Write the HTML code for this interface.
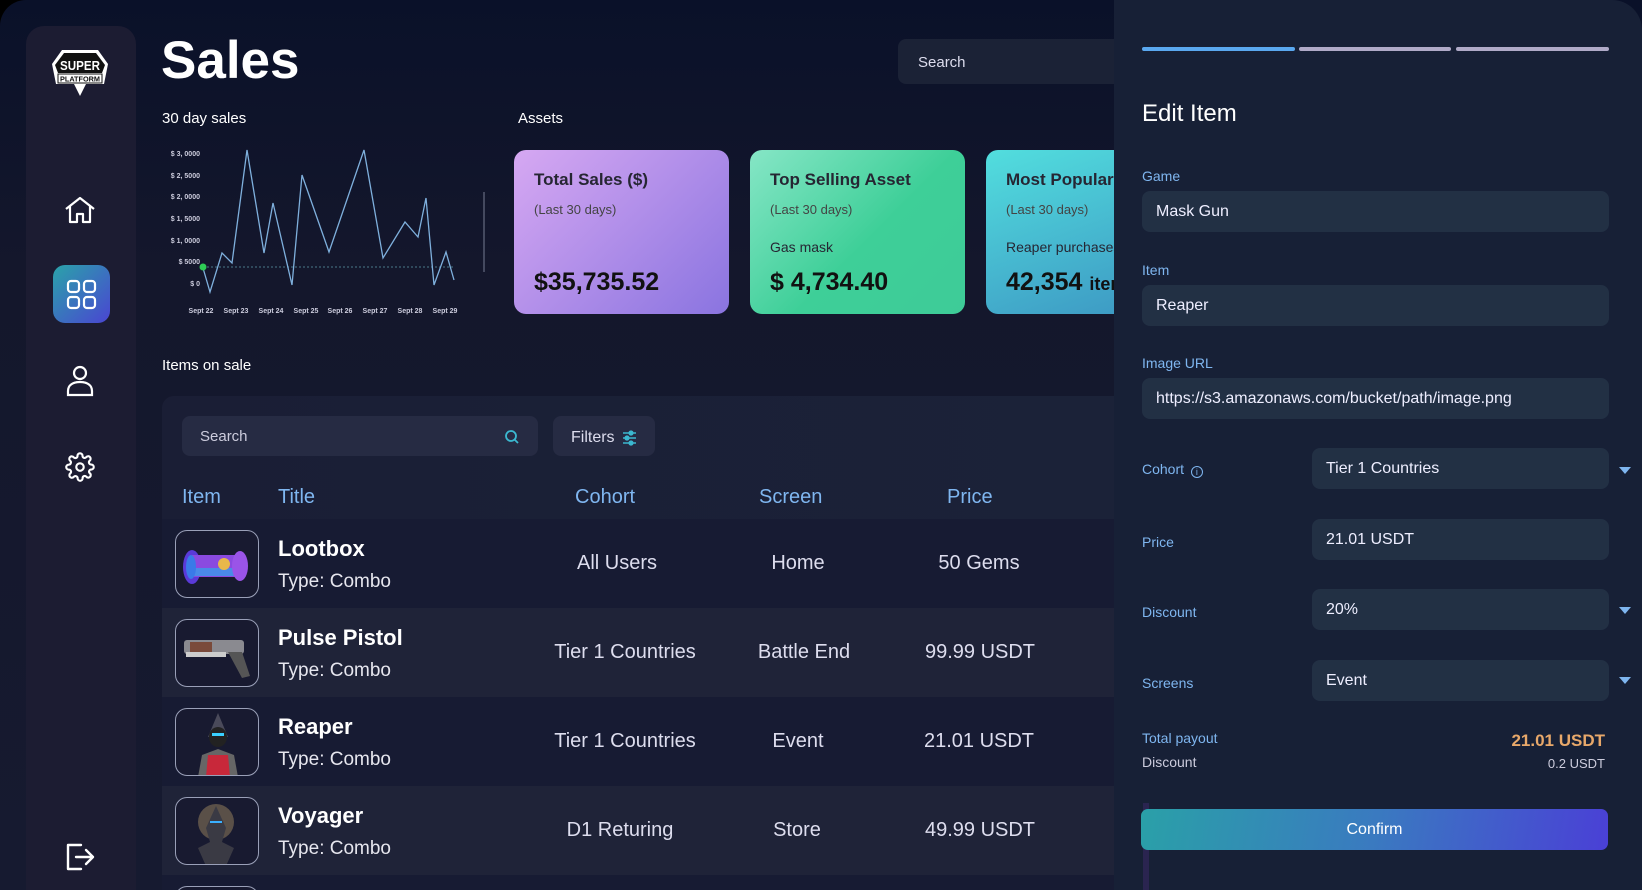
<!DOCTYPE html>
<html><head><meta charset="utf-8">
<style>
*{margin:0;padding:0;box-sizing:border-box}
html,body{width:1642px;height:890px;overflow:hidden}
body{background:#000;font-family:"Liberation Sans",sans-serif;color:#fff}
#app{position:absolute;left:0;top:0;width:1642px;height:890px;border-radius:26px 0 0 0;overflow:hidden;background:linear-gradient(180deg,#0a1129 0%,#14172c 30%,#161a30 100%)}
.abs{position:absolute}
#side{left:26px;top:26px;width:110px;height:864px;border-radius:18px 18px 0 0;background:#1c1c32}
.txt{position:absolute;white-space:nowrap}
.card{position:absolute;top:150px;width:215px;height:164px;border-radius:12px;color:#1a1a1a}
.card .t{position:absolute;left:20px;top:20px;font-size:17px;font-weight:bold;color:#262633}
.card .s{position:absolute;left:20px;top:52px;font-size:13px;color:#444}
.card .m{position:absolute;left:20px;top:89px;font-size:14px;color:#262633}
.card .v{position:absolute;left:20px;top:118px;font-size:25px;font-weight:bold;color:#111}
#panel{left:1114px;top:0;width:528px;height:890px;background:#172036;border-radius:0 30px 0 0}
.lbl{position:absolute;font-size:14px;color:#7fb6f0}
.inp{position:absolute;height:41px;background:#223044;border-radius:8px;font-size:16px;color:#eef;padding-left:14px;line-height:41px}
.arr{position:absolute;left:1619px;width:0;height:0;border-left:6px solid transparent;border-right:6px solid transparent;border-top:7px solid #7fb6f0}
.row{position:absolute;left:162px;width:952px;height:89px;overflow:hidden}
.thumb{position:absolute;left:13px;top:11px;width:84px;height:68px;border:1.5px solid #9aa0b8;border-radius:12px;background:#181a30;overflow:hidden}
.nm{position:absolute;left:116px;top:17px;font-size:22px;font-weight:bold}
.ty{position:absolute;left:116px;top:52px;font-size:19px;color:#e6e6ee}
.c{position:absolute;top:33px;font-size:20px;color:#dde;transform:translateX(-50%);white-space:nowrap}
.hd{position:absolute;top:486px;font-size:20px;color:#7fb6f0}
</style></head><body>
<div id="app">
<div class="abs" id="side"></div>
<!-- logo -->
<svg class="abs" style="left:48px;top:48px" width="64" height="52" viewBox="0 0 64 52">
<path d="M14 2 L50 2 L60 16 L56 36 L38 36 L32 48 L26 36 L8 36 L4 16 Z" fill="#fff"/>
<path d="M16 5 L48 5 L57 17 L54 25 L10 25 L7 17 Z" fill="#111"/>
<rect x="10" y="26" width="44" height="9" fill="#fff" stroke="#111"/>
<text x="32" y="22" font-size="13" font-weight="bold" fill="#fff" text-anchor="middle" font-family="Liberation Sans" textLength="40" lengthAdjust="spacingAndGlyphs">SUPER</text>
<text x="32" y="33.5" font-size="7.5" font-weight="bold" fill="#111" text-anchor="middle" font-family="Liberation Sans" textLength="40" lengthAdjust="spacingAndGlyphs">PLATFORM</text>
</svg>
<svg class="abs" style="left:64px;top:196px" width="32" height="28" viewBox="0 0 32 28" fill="none" stroke="#fff" stroke-width="2.2" stroke-linejoin="round"><path d="M2 13 L16 2 L30 13 M6 10 V26 H13 V18 H19 V26 H26 V10"/></svg>
<div class="abs" style="left:53px;top:265px;width:57px;height:58px;border-radius:12px;background:linear-gradient(135deg,#2aa3a9,#4a45d2)"></div>
<svg class="abs" style="left:66px;top:279px" width="31" height="31" viewBox="0 0 31 31" fill="none" stroke="#fff" stroke-width="2.2"><rect x="2" y="2" width="11" height="11" rx="3"/><rect x="18" y="2" width="11" height="11" rx="3"/><rect x="2" y="18" width="11" height="11" rx="3"/><rect x="18" y="18" width="11" height="11" rx="3"/></svg>
<svg class="abs" style="left:66px;top:365px" width="28" height="32" viewBox="0 0 28 32" fill="none" stroke="#fff" stroke-width="2.2"><circle cx="14" cy="8" r="6"/><path d="M2 30 V26 C2 20 7 17 14 17 C21 17 26 20 26 26 V30 Z"/></svg>
<svg class="abs" style="left:65px;top:452px" width="30" height="30" viewBox="0 0 24 24" fill="none" stroke="#fff" stroke-width="1.7"><circle cx="12" cy="12" r="3"/><path d="M19.4 15a1.7 1.7 0 0 0 .3 1.8l.1.1a2 2 0 1 1-2.8 2.8l-.1-.1a1.7 1.7 0 0 0-1.8-.3 1.7 1.7 0 0 0-1 1.5V21a2 2 0 1 1-4 0v-.1a1.7 1.7 0 0 0-1.1-1.5 1.7 1.7 0 0 0-1.8.3l-.1.1a2 2 0 1 1-2.8-2.8l.1-.1a1.7 1.7 0 0 0 .3-1.8 1.7 1.7 0 0 0-1.5-1H3a2 2 0 1 1 0-4h.1a1.7 1.7 0 0 0 1.5-1.100 1.7 1.7 0 0 0-.3-1.8l-.1-.1a2 2 0 1 1 2.8-2.8l.1.1a1.7 1.7 0 0 0 1.8.3H9a1.7 1.7 0 0 0 1-1.5V3a2 2 0 1 1 4 0v.1a1.7 1.7 0 0 0 1 1.5 1.7 1.7 0 0 0 1.8-.3l.1-.1a2 2 0 1 1 2.8 2.8l-.1.1a1.7 1.7 0 0 0-.3 1.8V9a1.7 1.7 0 0 0 1.5 1H21a2 2 0 1 1 0 4h-.1a1.7 1.7 0 0 0-1.5 1z"/></svg>
<svg class="abs" style="left:65px;top:842px" width="30" height="30" viewBox="0 0 30 30" fill="none" stroke="#fff" stroke-width="2.4" stroke-linejoin="round" stroke-linecap="round"><path d="M16 3 H3 V27 H16 M11 15 H28 M21 8 L28 15 L21 22"/></svg>

<div class="txt" style="left:161px;top:30px;font-size:53px;font-weight:bold">Sales</div>
<div class="txt" style="left:162px;top:110px;font-size:15px">30 day sales</div>
<div class="txt" style="left:518px;top:110px;font-size:15px">Assets</div>

<svg class="abs" style="left:160px;top:140px" width="340" height="185" viewBox="160 140 340 185" font-family="Liberation Sans" font-size="7" font-weight="bold" fill="#ccd">
<g text-anchor="end"><text x="200" y="156">$ 3, 0000</text><text x="200" y="178">$ 2, 5000</text><text x="200" y="199">$ 2, 0000</text><text x="200" y="221">$ 1, 5000</text><text x="200" y="243">$ 1, 0000</text><text x="200" y="264">$ 5000</text><text x="200" y="286">$ 0</text></g>
<g text-anchor="middle"><text x="201" y="313">Sept 22</text><text x="236" y="313">Sept 23</text><text x="271" y="313">Sept 24</text><text x="306" y="313">Sept 25</text><text x="340" y="313">Sept 26</text><text x="375" y="313">Sept 27</text><text x="410" y="313">Sept 28</text><text x="445" y="313">Sept 29</text></g>
<line x1="203" y1="267" x2="454" y2="267" stroke="#4a7a8a" stroke-dasharray="2 2" stroke-width="1"/>
<polyline fill="none" stroke="#7fb0dd" stroke-width="1.3" points="203,268 210,292 222,253 232,263 247,150 264,253 273,203 292,285 302,175 329,252 364,150 383,258 405,222 418,237 426,198 434,285 446,252 454,280"/>
<circle cx="203" cy="267" r="3.5" fill="#2ecc55"/>
<line x1="484" y1="192" x2="484" y2="272" stroke="#555a70" stroke-width="1.5"/>
</svg>

<div class="card" style="left:514px;background:linear-gradient(135deg,#d6a8f2,#8a74e0)"><div class="t">Total Sales ($)</div><div class="s">(Last 30 days)</div><div class="v">$35,735.52</div></div>
<div class="card" style="left:750px;background:linear-gradient(135deg,#86e6c6,#3ecf98 55%,#3ecb98)"><div class="t">Top Selling Asset</div><div class="s">(Last 30 days)</div><div class="m">Gas mask</div><div class="v">$ 4,734.40</div></div>
<div class="card" style="left:986px;width:240px;background:linear-gradient(160deg,#52dede,#3a8fc0)"><div class="t">Most Popular</div><div class="s">(Last 30 days)</div><div class="m">Reaper purchases</div><div class="v">42,354 <span style="font-size:18px">items</span></div></div>

<div class="abs" style="left:898px;top:39px;width:230px;height:45px;border-radius:8px;background:#1b2236"></div>
<div class="txt" style="left:918px;top:54px;font-size:15px;color:#dde">Search</div>

<div class="txt" style="left:162px;top:357px;font-size:15px">Items on sale</div>
<div class="abs" style="left:162px;top:396px;width:960px;height:494px;border-radius:12px 0 0 0;background:linear-gradient(90deg,#1a1e35,#1b2238)"></div>
<div class="abs" style="left:182px;top:416px;width:356px;height:40px;border-radius:8px;background:#262b43"></div>
<div class="txt" style="left:200px;top:428px;font-size:15px;color:#ccd">Search</div>
<svg class="abs" style="left:504px;top:429px" width="16" height="16" viewBox="0 0 16 16" fill="none" stroke="#3bb8d0" stroke-width="1.8"><circle cx="7" cy="7" r="5"/><path d="M11 11 L14 14"/></svg>
<div class="abs" style="left:553px;top:416px;width:102px;height:40px;border-radius:8px;background:#262b43"></div>
<div class="txt" style="left:571px;top:429px;font-size:16px;color:#dde">Filters</div>
<svg class="abs" style="left:622px;top:430px" width="15" height="16" viewBox="0 0 15 16" stroke="#3bb8d0" stroke-width="1.6"><path d="M1 3H14M1 8H14M1 13H14"/><circle cx="9" cy="3" r="1.8" fill="#3bb8d0"/><circle cx="5" cy="8" r="1.8" fill="#3bb8d0"/><circle cx="9" cy="13" r="1.8" fill="#3bb8d0"/></svg>

<div class="hd" style="left:182px">Item</div><div class="hd" style="left:278px">Title</div><div class="hd" style="left:575px">Cohort</div><div class="hd" style="left:759px">Screen</div><div class="hd" style="left:947px">Price</div>

<div class="row" style="top:519px;background:#171b33">
<div class="thumb"><svg width="84" height="68" viewBox="0 0 84 68"><ellipse cx="16" cy="36" rx="9" ry="17" fill="#5a3ad8"/><rect x="16" y="24" width="50" height="22" fill="#8a4ae0"/><rect x="16" y="37" width="50" height="8" fill="#4a8ae8"/><ellipse cx="64" cy="35" rx="8" ry="15" fill="#9a54e8"/><circle cx="48" cy="33" r="6" fill="#e8b84a"/><ellipse cx="15" cy="36" rx="5" ry="12" fill="#3a7ae8"/></svg></div>
<div class="nm">Lootbox</div><div class="ty">Type: Combo</div>
<div class="c" style="left:455px">All Users</div><div class="c" style="left:636px">Home</div><div class="c" style="left:817px">50 Gems</div></div>

<div class="row" style="top:608px;background:#1f2338">
<div class="thumb"><svg width="84" height="68" viewBox="0 0 84 68"><rect x="8" y="20" width="60" height="14" rx="3" fill="#8a8a90"/><rect x="14" y="22" width="22" height="10" fill="#7a4a3a"/><path d="M52 32 L66 32 L74 56 L66 58 Z" fill="#555"/><rect x="10" y="32" width="40" height="5" fill="#ccc"/></svg></div>
<div class="nm">Pulse Pistol</div><div class="ty">Type: Combo</div>
<div class="c" style="left:463px">Tier 1 Countries</div><div class="c" style="left:642px">Battle End</div><div class="c" style="left:818px">99.99 USDT</div></div>

<div class="row" style="top:697px;background:#171b33">
<div class="thumb"><svg width="84" height="68" viewBox="0 0 84 68"><path d="M42 4 L52 28 L32 28 Z" fill="#4a4a5a"/><ellipse cx="42" cy="28" rx="9" ry="10" fill="#222"/><rect x="36" y="24" width="12" height="3" fill="#3ad0ff"/><path d="M22 68 L26 46 L42 40 L58 46 L62 68 Z" fill="#666"/><path d="M30 68 L32 46 L52 46 L54 68 Z" fill="#c8283a"/></svg></div>
<div class="nm">Reaper</div><div class="ty">Type: Combo</div>
<div class="c" style="left:463px">Tier 1 Countries</div><div class="c" style="left:636px">Event</div><div class="c" style="left:817px">21.01 USDT</div></div>

<div class="row" style="top:786px;background:#1f2338">
<div class="thumb"><svg width="84" height="68" viewBox="0 0 84 68"><circle cx="40" cy="24" r="18" fill="#5a5048"/><path d="M40 8 L50 30 L46 44 L58 50 L50 68 L30 68 L22 50 L34 44 L30 30 Z" fill="#3a3a44"/><path d="M34 24 L46 24" stroke="#3ab0ff" stroke-width="2"/></svg></div>
<div class="nm">Voyager</div><div class="ty">Type: Combo</div>
<div class="c" style="left:458px">D1 Returing</div><div class="c" style="left:635px">Store</div><div class="c" style="left:818px">49.99 USDT</div></div>

<div class="row" style="top:875px;height:15px;background:#171b33"><div class="thumb"></div></div>

<div class="abs" id="panel"></div>
<div class="abs" style="left:1142px;top:47px;width:153px;height:4px;border-radius:2px;background:#5aa8f0"></div>
<div class="abs" style="left:1299px;top:47px;width:152px;height:4px;border-radius:2px;background:#b0aac8"></div>
<div class="abs" style="left:1456px;top:47px;width:153px;height:4px;border-radius:2px;background:#b0aac8"></div>
<div class="txt" style="left:1142px;top:100px;font-size:24px">Edit Item</div>
<div class="lbl" style="left:1142px;top:168px">Game</div>
<div class="inp" style="left:1142px;top:191px;width:467px">Mask Gun</div>
<div class="lbl" style="left:1142px;top:262px">Item</div>
<div class="inp" style="left:1142px;top:285px;width:467px">Reaper</div>
<div class="lbl" style="left:1142px;top:355px">Image URL</div>
<div class="inp" style="left:1142px;top:378px;width:467px">https://s3.amazonaws.com/bucket/path/image.png</div>

<div class="lbl" style="left:1142px;top:461px">Cohort <span style="display:inline-block;width:12px;height:12px;border:1.5px solid #7fb6f0;border-radius:50%;font-size:9px;text-align:center;line-height:10px;vertical-align:-1px;margin-left:3px">i</span></div>
<div class="inp" style="left:1312px;top:448px;width:297px">Tier 1 Countries</div><div class="arr" style="top:467px"></div>
<div class="lbl" style="left:1142px;top:534px">Price</div>
<div class="inp" style="left:1312px;top:519px;width:297px">21.01 USDT</div>
<div class="lbl" style="left:1142px;top:604px">Discount</div>
<div class="inp" style="left:1312px;top:589px;width:297px">20%</div><div class="arr" style="top:607px"></div>
<div class="lbl" style="left:1142px;top:675px">Screens</div>
<div class="inp" style="left:1312px;top:660px;width:297px">Event</div><div class="arr" style="top:677px"></div>

<div class="txt" style="left:1142px;top:730px;font-size:14px;color:#7fb6f0">Total payout</div>
<div class="txt" style="left:1142px;top:754px;font-size:14px;color:#ccd">Discount</div>
<div class="txt" style="right:37px;top:731px;font-size:17px;font-weight:bold;color:#e8a86a">21.01 USDT</div>
<div class="txt" style="right:37px;top:756px;font-size:13px;color:#ccd">0.2 USDT</div>
<div class="abs" style="left:1143px;top:803px;width:6px;height:87px;background:#2a2450"></div>
<div class="abs" style="left:1141px;top:809px;width:467px;height:41px;border-radius:7px;background:linear-gradient(100deg,#2aa0a8,#3a7ac0 50%,#4a40d6);text-align:center;line-height:41px;font-size:16px">Confirm</div>
</div>
</body></html>
